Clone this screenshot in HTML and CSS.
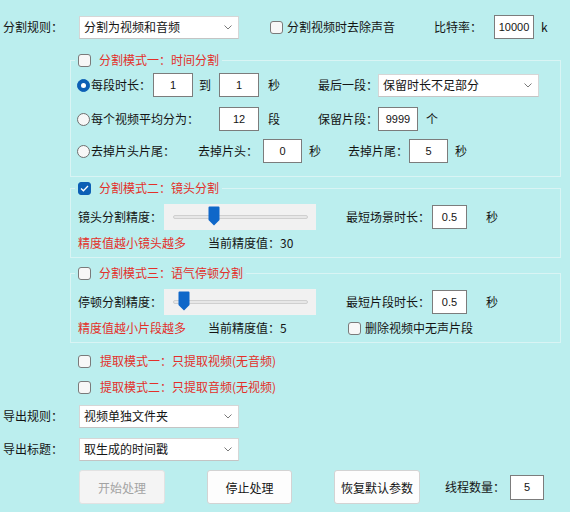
FILE: index.html
```html
<!DOCTYPE html>
<html lang="zh-CN">
<head>
<meta charset="utf-8">
<title>分割设置</title>
<link rel="stylesheet" href="styles.css">
</head>
<body>
<div class="app">
  <div class="row r1">
    <span class="cell w79 pl3">分割规则：</span>
    <div class="combo w160"><span>分割为视频和音频</span><svg class="chev" width="8" height="5" viewBox="0 0 8 5"><polyline points="0.5,0.5 4,4 7.5,0.5" fill="none" stroke="#7a7a7a" stroke-width="1"/></svg></div>
    <span class="chk ml31"></span><span class="ml4">分割视频时去除声音</span>
    <span class="cell w60 ml39">比特率：</span>
    <span class="num w40 h24">10000</span>
    <span class="ml7">k</span>
  </div>

  <fieldset class="group g1">
    <legend><span class="chk"></span><span class="title">分割模式一：时间分割</span></legend>
    <div class="row rA h24 pl6">
      <span class="cell w76"><span class="radio on"></span><span class="ml1">每段时长：</span></span>
      <span class="num w40 h24">1</span>
      <span class="cell w26 pl6">到</span>
      <span class="num w40 h24">1</span>
      <span class="cell w59 pl9">秒</span>
      <span class="cell w60">最后一段：</span>
      <div class="combo w161 h24"><span>保留时长不足部分</span><svg class="chev" width="8" height="5" viewBox="0 0 8 5"><polyline points="0.5,0.5 4,4 7.5,0.5" fill="none" stroke="#7a7a7a" stroke-width="1"/></svg></div>
    </div>
    <div class="row rB h24 pl6">
      <span class="cell w142"><span class="radio"></span><span class="ml1">每个视频平均分为：</span></span>
      <span class="num w40 h24">12</span>
      <span class="cell w59 pl9">段</span>
      <span class="cell w60">保留片段：</span>
      <span class="num w40 h24">9999</span>
      <span class="ml8">个</span>
    </div>
    <div class="row rC h24 pl6">
      <span class="cell w121"><span class="radio"></span><span class="ml1">去掉片头片尾：</span></span>
      <span class="cell w65">去掉片头：</span>
      <span class="num w39 h24">0</span>
      <span class="cell w46 pl7">秒</span>
      <span class="cell w61">去掉片尾：</span>
      <span class="num w39 h24">5</span>
      <span class="ml7">秒</span>
    </div>
  </fieldset>

  <fieldset class="group g2">
    <legend><span class="chk on"><svg width="9" height="7" viewBox="0 0 9 7"><polyline points="1,3.5 3.4,5.8 8,1" fill="none" stroke="#fff" stroke-width="1.3"/></svg></span><span class="title">分割模式二：镜头分割</span></legend>
    <div class="row rD h26 pl7">
      <span class="cell w86">镜头分割精度：</span>
      <div class="slider"><div class="track"></div><svg class="thumb" style="left:44px" width="12" height="20" viewBox="0 0 12 20"><path d="M1.5 0.5 H10.5 A1 1 0 0 1 11.5 1.5 V14 L6 19.5 L0.5 14 V1.5 A1 1 0 0 1 1.5 0.5 Z" fill="#0f67c9"/></svg></div>
      <span class="cell w116 pl30">最短场景时长：</span>
      <span class="num w35 h24">0.5</span>
      <span class="ml19">秒</span>
    </div>
    <div class="row rE h16 pl7">
      <span class="cell w130 red">精度值越小镜头越多</span>
      <span>当前精度值：30</span>
    </div>
  </fieldset>

  <fieldset class="group g3">
    <legend><span class="chk"></span><span class="title">分割模式三：语气停顿分割</span></legend>
    <div class="row rD h26 pl7">
      <span class="cell w86">停顿分割精度：</span>
      <div class="slider"><div class="track"></div><svg class="thumb" style="left:14px" width="12" height="20" viewBox="0 0 12 20"><path d="M1.5 0.5 H10.5 A1 1 0 0 1 11.5 1.5 V14 L6 19.5 L0.5 14 V1.5 A1 1 0 0 1 1.5 0.5 Z" fill="#0f67c9"/></svg></div>
      <span class="cell w116 pl30">最短片段时长：</span>
      <span class="num w35 h24">0.5</span>
      <span class="ml19">秒</span>
    </div>
    <div class="row rE h16 pl7">
      <span class="cell w130 red">精度值越小片段越多</span>
      <span class="cell w140">当前精度值：5</span>
      <span class="chk"></span><span class="ml4">删除视频中无声片段</span>
    </div>
  </fieldset>

  <div class="row ex h16">
    <span class="chk"></span><span class="ml9 red">提取模式一：只提取视频(无音频)</span>
  </div>
  <div class="row ex h16">
    <span class="chk"></span><span class="ml9 red">提取模式二：只提取音频(无视频)</span>
  </div>

  <div class="row exp h24">
    <span class="cell w79 pl3">导出规则：</span>
    <div class="combo w160 h24"><span>视频单独文件夹</span><svg class="chev" width="8" height="5" viewBox="0 0 8 5"><polyline points="0.5,0.5 4,4 7.5,0.5" fill="none" stroke="#7a7a7a" stroke-width="1"/></svg></div>
  </div>
  <div class="row exp h24">
    <span class="cell w79 pl3">导出标题：</span>
    <div class="combo w160 h24"><span>取生成的时间戳</span><svg class="chev" width="8" height="5" viewBox="0 0 8 5"><polyline points="0.5,0.5 4,4 7.5,0.5" fill="none" stroke="#7a7a7a" stroke-width="1"/></svg></div>
  </div>

  <div class="row btns">
    <button class="btn disabled w86" disabled>开始处理</button>
    <button class="btn w85">停止处理</button>
    <button class="btn w86 last">恢复默认参数</button>
    <span class="cell w65 ml25">线程数量：</span>
    <span class="num w34 h25">5</span>
  </div>
</div>
</body>
</html>
```
FILE: styles.css
```css
* { box-sizing: border-box; }
html, body { margin: 0; padding: 0; }
body {
  background: #bbeeee;
  font-family: "Noto Sans CJK SC", "Microsoft YaHei", sans-serif;
  font-size: 12px;
  line-height: 16px;
  color: #141414;
  width: 570px;
  height: 512px;
  overflow: hidden;
}
.app { display: flex; flex-direction: column; padding-top: 14px; }
.row { display: flex; align-items: center; white-space: nowrap; }
.cell { display: flex; align-items: center; flex: none; }

.r1 { height: 26px; }
.h16 { height: 16px; }
.h24 { height: 24px; }
.h25 { height: 25px; }
.h26 { height: 26px; }

.w26 { width: 26px; } .w34 { width: 34px; } .w35 { width: 35px; }
.w39 { width: 39px; } .w40 { width: 40px; } .w46 { width: 46px; }
.w59 { width: 59px; } .w60 { width: 60px; } .w61 { width: 61px; }
.w65 { width: 65px; } .w76 { width: 76px; } .w79 { width: 79px; }
.w85 { width: 85px; } .w86 { width: 86px; } .w116 { width: 116px; }
.w121 { width: 121px; } .w130 { width: 130px; } .w140 { width: 140px; }
.w142 { width: 142px; } .w160 { width: 160px; } .w161 { width: 161px; }

.pl3 { padding-left: 3px; } .pl6 { padding-left: 6px; } .pl7 { padding-left: 7px; }
.pl9 { padding-left: 9px; } .pl30 { padding-left: 30px; }
.ml1 { margin-left: 1px; } .ml4 { margin-left: 4px; } .ml7 { margin-left: 7px; }
.ml8 { margin-left: 8px; } .ml9 { margin-left: 9px; } .ml19 { margin-left: 19px; }
.ml25 { margin-left: 25px; } .ml31 { margin-left: 31px; } .ml39 { margin-left: 39px; }

.red { color: #e3302a; }

.combo {
  flex: none;
  height: 23px;
  background: #fff;
  border: 1px solid #d6d6d6;
  border-bottom-color: #c4c4c4;
  display: flex;
  align-items: center;
  justify-content: space-between;
  padding: 0 6px 0 4px;
  color: #141414;
}
.chev { flex: none; }

.num {
  flex: none;
  background: #fff;
  border: 1px solid #7c7c7c;
  display: flex;
  align-items: center;
  justify-content: center;
  color: #141414;
  font-family: "Liberation Sans", "Noto Sans CJK SC", sans-serif;
  font-size: 11px;
}

.chk {
  flex: none;
  width: 13px;
  height: 13px;
  border: 1px solid #7a7a7a;
  border-radius: 3px;
  background: #f7f7f7;
  display: inline-flex;
  align-items: center;
  justify-content: center;
}
.chk.on { background: #0c5fb5; border-color: #0c5fb5; }

.radio {
  flex: none;
  width: 13px;
  height: 13px;
  border: 1px solid #6e6e6e;
  border-radius: 50%;
  background: #f7f7f7;
  display: inline-flex;
  align-items: center;
  justify-content: center;
}
.radio.on { background: #0c5fb5; border-color: #0c5fb5; }
.radio.on::after {
  content: "";
  width: 5px;
  height: 5px;
  border-radius: 50%;
  background: #fff;
}

.group {
  margin: 0 0 0 70px;
  padding: 0;
  width: 491px;
  min-width: 0;
  border: 1px solid #d9f4f4;
}
.group legend {
  margin-left: 4px;
  padding: 0 3px;
  height: 16px;
  display: flex;
  align-items: center;
}
.group .title { margin-left: 8px; color: #e3302a; line-height: 16px; }

.g1 { margin-top: 12px; padding-bottom: 13px; }
.g2 { margin-top: 3px; padding-bottom: 6px; }
.g3 { margin-top: 7px; padding-bottom: 6px; }

.rA { margin-top: 5px; }
.rB { margin-top: 10px; }
.rC { margin-top: 8px; }
.rD { margin-top: 8px; }
.rE { margin-top: 5px; }

.slider {
  flex: none;
  position: relative;
  width: 152px;
  height: 26px;
  background: #f1f1f1;
  padding: 0 8px 0 9px;
  display: flex;
  align-items: center;
}
.track {
  flex: 1;
  height: 4px;
  background: #e7e7e7;
  border: 1px solid #cfcfcf;
  border-radius: 2px;
}
.thumb { position: absolute; top: 2px; }

.ex { margin-top: 10px; padding-left: 78px; }
.exp { margin-top: 9px; }

.btns { margin-top: 9px; padding-left: 79px; height: 34px; }
.btn {
  flex: none;
  height: 34px;
  margin: 0 42px 0 0;
  padding: 0;
  background: #fdfdfd;
  border: 1px solid #d3d3d3;
  border-radius: 3px;
  font-family: inherit;
  font-size: 12px;
  color: #141414;
}
.btn.last { margin-right: 0; }
.btn.disabled { background: #f4f4f4; border-color: #e2e2e2; color: #a3a3a3; }
```
